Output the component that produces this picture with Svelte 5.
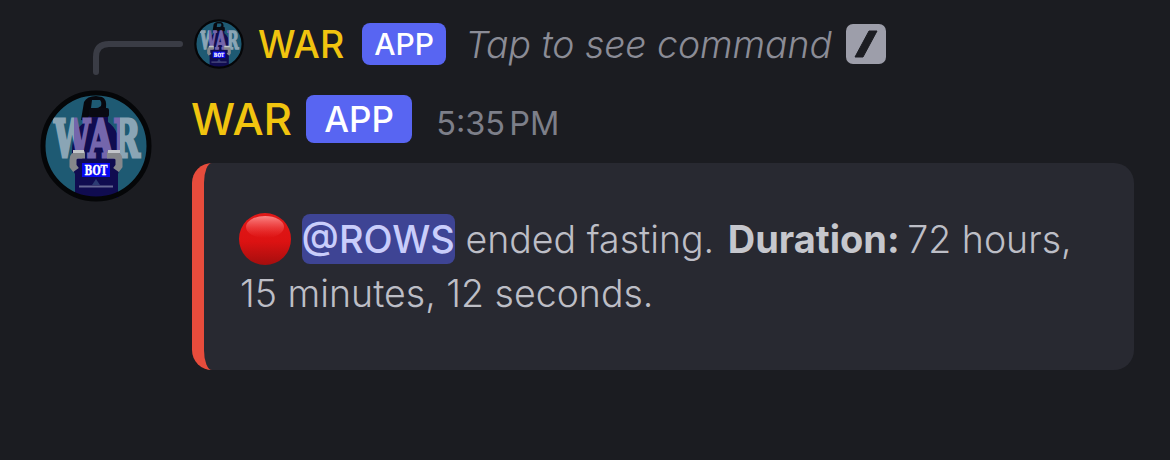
<script>
  const title = 'WAR';
</script>

{#snippet avatar()}
  <svg class="art" viewBox="0 0 112 112" aria-hidden="true">
    <defs>
      <linearGradient id="warfill" gradientUnits="userSpaceOnUse" x1="0" y1="0" x2="112" y2="0">
        <stop offset=".3" stop-color="#8aa5b5" />
        <stop offset=".3" stop-color="#7466ac" />
        <stop offset=".71" stop-color="#7466ac" />
        <stop offset=".71" stop-color="#8aa5b5" />
      </linearGradient>
    </defs>
    <circle cx="56" cy="56" r="53" fill="#1e5a73" />
    <path d="M35 108 L35 84 L32 78 L32 62 Q32 40 45 32 L45 22 L68 22 L68 32 Q80 40 80 62 L80 78 L78 84 L78 108 Z" fill="#100c50" />
    <path fill-rule="evenodd" d="M41 30 L44 12 Q47 6 56 6 L62 7 Q67 9 66 18 Q65 26 58 25 L50 24 L46 31 Z M52 10 L60 10 Q62 12 61 16 Q58 19 51 18 Z" fill="#07080e" />
    <rect x="49" y="18" width="20" height="9" rx="2" fill="#090a12" />
    <text class="war" x="57" y="67" text-anchor="middle" textLength="86" lengthAdjust="spacingAndGlyphs">WAR</text>
    <path d="M36 80 L33 76 L33 70 Q33 65 38 65 L45 65 M76 80 L79 76 L79 70 Q79 65 74 65 L67 65" fill="none" stroke="#85878b" stroke-width="7" />
    <path d="M33 61.500 H44 M68 61.500 H80" stroke="#c2c5c9" stroke-width="3" />
    <rect x="42" y="73" width="28" height="14" fill="#0808f2" />
    <text class="bot" x="56" y="84.500" text-anchor="middle" textLength="23" lengthAdjust="spacingAndGlyphs">BOT</text>
    <path d="M56 89 L60 95 L52 95 Z" fill="#2c3b73" />
    <rect x="39" y="95.500" width="34" height="2" fill="#8a8eb0" opacity=".7" />
    <circle cx="56" cy="56" r="53" fill="none" stroke="#050608" stroke-width="5" />
  </svg>
{/snippet}

<main class="message">
  <div class="gutter">
    <svg class="spine" viewBox="0 0 92 35" aria-hidden="true">
      <path d="M4 32 L4 17 Q4 4 17 4 L88 4" fill="none" stroke="#3a3c45" stroke-width="6" stroke-linecap="round" />
    </svg>
    <div class="avatar-large">{@render avatar()}</div>
  </div>

  <div class="content">
    <div class="reply">
      <div class="avatar-small">{@render avatar()}</div>
      <span class="reply-name">{title}</span>
      <span class="badge badge-small">APP</span>
      <em class="command">Tap to see command</em>
      <span class="slash" aria-hidden="true">
        <svg viewBox="0 0 40 40"><path d="M23 7 L31 7 L17 33 L9 33 Z" fill="#1c1d22" stroke="#1c1d22" stroke-width="1" stroke-linejoin="round" /></svg>
      </span>
    </div>

    <header class="header">
      <span class="name">{title}</span>
      <span class="badge badge-large">APP</span>
      <time class="time">5:35 PM</time>
    </header>

    <section class="embed">
      <p class="body">
        <svg class="emoji" viewBox="0 0 52 52" aria-hidden="true">
          <defs>
            <linearGradient id="red" x1="0" y1="0" x2="0" y2="1">
              <stop offset="0" stop-color="#e01818" />
              <stop offset=".55" stop-color="#dc1212" />
              <stop offset="1" stop-color="#a40e0e" />
            </linearGradient>
            <linearGradient id="shine" x1="0" y1="0" x2="0" y2="1">
              <stop offset="0" stop-color="#ff9a9a" stop-opacity=".85" />
              <stop offset="1" stop-color="#ff5050" stop-opacity="0" />
            </linearGradient>
          </defs>
          <circle cx="26" cy="26" r="26" fill="url(#red)" />
          <ellipse cx="26" cy="14" rx="19" ry="11" fill="url(#shine)" />
        </svg>
        <span class="mention">@ROWS</span> ended fasting. <strong>Duration:</strong> 72 hours, 15 minutes, 12 seconds.
      </p>
    </section>
  </div>
</main>

<style>
  :global(body) {
    margin: 0;
    background: #1b1c21;
  }

  .message {
    display: grid;
    grid-template-columns: 192px 942px;
    height: 460px;
    font-family: Inter, "Noto Sans", sans-serif;
    overflow: hidden;
  }

  .gutter {
    display: flex;
    flex-direction: column;
    padding: 40px 0 0 92px;
  }

  .spine {
    display: block;
    flex: none;
    width: 92px;
    height: 35px;
  }

  .avatar-large {
    width: 112px;
    height: 112px;
    margin: 15px 0 0 -52px;
  }

  .avatar-small {
    width: 50px;
    height: 50px;
    flex: none;
    margin-left: 2px;
  }

  .art {
    display: block;
    width: 100%;
    height: 100%;
    overflow: visible;
  }

  .war {
    font-family: "DejaVu Serif", serif;
    font-weight: 900;
    font-size: 52px;
    fill: url(#warfill);
    stroke: url(#warfill);
    stroke-width: 3px;
  }

  .bot {
    font-family: "DejaVu Serif", serif;
    font-weight: 700;
    font-size: 12.500px;
    fill: #fff;
    stroke: #fff;
    stroke-width: 0.4px;
  }

  .content {
    padding-top: 19px;
    min-width: 0;
  }

  .reply {
    display: flex;
    align-items: center;
    height: 50px;
  }

  .reply-name {
    margin-left: 14px;
    font-size: 37.500px;
    font-weight: 500;
    color: #f1c40f;
  }

  .badge {
    display: flex;
    align-items: center;
    justify-content: center;
    background: #5865f2;
    color: #fff;
    font-weight: 500;
    border-radius: 8px;
  }

  .badge-small {
    width: 84px;
    height: 42px;
    margin-left: 18px;
    font-size: 30px;
  }

  .command {
    margin-left: 19px;
    font-size: 37.300px;
    font-weight: 300;
    color: #8b8c96;
    white-space: nowrap;
  }

  .slash {
    width: 40px;
    height: 40px;
    margin-left: 14px;
    background: #9d9eaa;
    border-radius: 7px;
    flex: none;
  }

  .slash svg {
    display: block;
    width: 100%;
    height: 100%;
  }

  .header {
    display: flex;
    align-items: center;
    height: 48px;
    margin-top: 26px;
  }

  .name {
    font-size: 44px;
    font-weight: 500;
    color: #f1c40f;
    margin-left: -1px;
  }

  .badge-large {
    width: 106px;
    height: 48px;
    margin-left: 14px;
    font-size: 35px;
  }

  .time {
    margin: 8px 0 0 24px;
    font-size: 32.500px;
    word-spacing: -5px;
    color: #7d7f89;
  }

  .embed {
    height: 207px;
    margin-top: 20px;
    box-sizing: border-box;
    background: #282931;
    border-left: 12px solid #e74c3c;
    border-radius: 20px;
    padding: 49px 36px 0;
  }

  .body {
    margin: 0;
    font-size: 37.500px;
    line-height: 54px;
    font-weight: 300;
    color: #bdbec6;
  }

  .body strong {
    margin: 0 -3px 0 3px;
    font-size: 38px;
    font-weight: 700;
    color: #c6c7cd;
  }

  .emoji {
    display: inline-block;
    width: 52px;
    height: 52px;
    margin-left: -1px;
    vertical-align: -12px;
  }

  .mention {
    display: inline-block;
    background: #3e4494;
    color: #c9cdfb;
    font-size: 38px;
    font-weight: 500;
    border-radius: 8px;
    line-height: 50px;
  }
</style>
